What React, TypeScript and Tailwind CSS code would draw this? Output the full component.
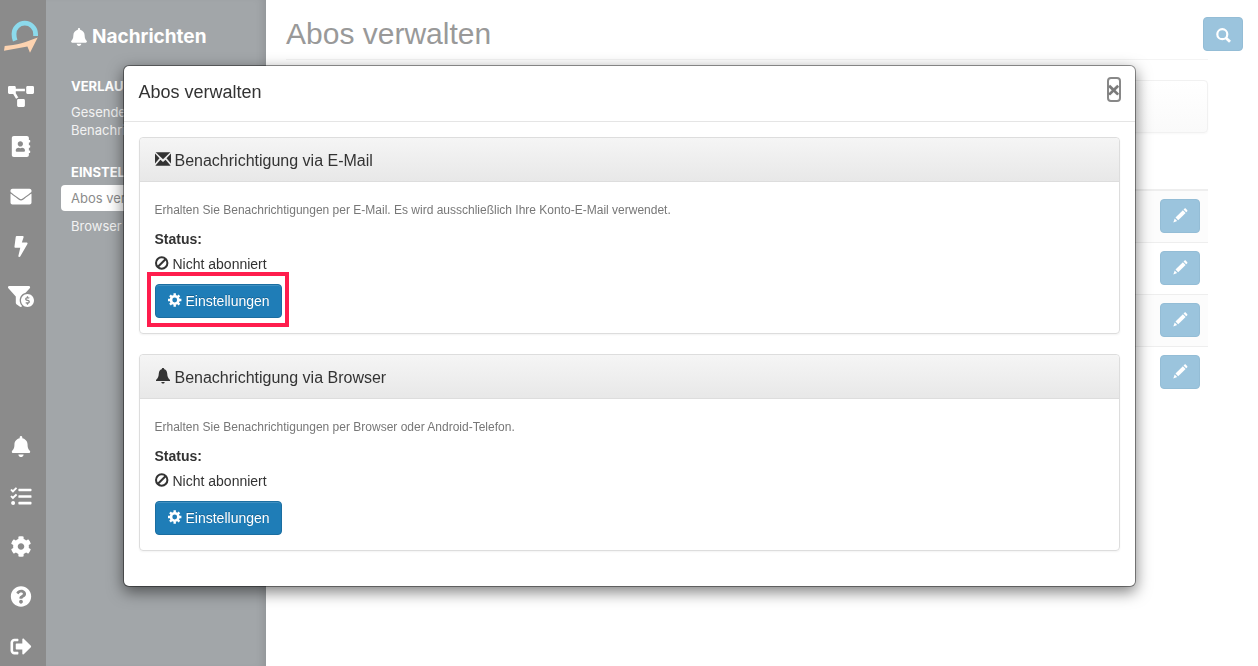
import React from "react";
import {
  FaAddressBook,
  FaBell,
  FaBolt,
  FaCog,
  FaEnvelope,
  FaFunnelDollar,
  FaProjectDiagram,
  FaQuestionCircle,
  FaSignOutAlt,
  FaTasks,
} from "react-icons/fa";

const topIcons = [
  { label: "Struktur", Icon: FaProjectDiagram },
  { label: "Kontakte", Icon: FaAddressBook },
  { label: "E-Mail", Icon: FaEnvelope },
  { label: "Aktionen", Icon: FaBolt },
  { label: "Filter", Icon: FaFunnelDollar },
];

const bottomIcons = [
  { label: "Nachrichten", Icon: FaBell },
  { label: "Aufgaben", Icon: FaTasks },
  { label: "Verwaltung", Icon: FaCog },
  { label: "Hilfe", Icon: FaQuestionCircle },
  { label: "Abmelden", Icon: FaSignOutAlt },
];

function Logo() {
  return (
    <svg viewBox="3 20 36 34" className="w-9 h-[34px]" aria-hidden="true">
      <path
        d="M15.2 40.6C14.200 38.200 14 36 14 34A10.800 10.800 0 0 1 35.600 34V36"
        fill="none"
        stroke="#8cdaec"
        strokeWidth="4.800"
      />
      <path d="M4.700 46C16 45.500 27 42 37.700 37.600L30 52.800L27.400 46.400L4 50.800Z" fill="#fdd3b0" />
    </svg>
  );
}

function EnvelopeIcon() {
  return (
    <svg viewBox="0 0 50 42" className="w-4 h-[14px] mb-1" fill="currentColor" aria-hidden="true">
      <path d="M2 0H48L25 22Z" />
      <path d="M0 4L14 19L0 35Z" />
      <path d="M50 4L36 19L50 35Z" />
      <path d="M1 42L17 23L25 30L33 23L49 42Z" />
    </svg>
  );
}

function BellIcon() {
  return (
    <svg viewBox="0 0 16 16" className="w-4 h-4 mb-1" fill="currentColor" aria-hidden="true">
      <path d="M8 0C8.800 0 9.200.5 9.300 1.200C11.200 1.700 12 3.400 12.200 5.400C12.400 8.200 12.800 9.800 15 12V13H1V12C3.200 9.800 3.600 8.200 3.800 5.400C4 3.400 4.800 1.700 6.700 1.200C6.800.5 7.200 0 8 0Z" />
      <path d="M6.300 14H9.700C9.500 15 8.900 15.600 8 15.600S6.500 15 6.300 14Z" />
    </svg>
  );
}

function BanIcon() {
  return (
    <svg viewBox="0 0 14 14" className="w-[14px] h-[14px] mb-[2px]" fill="none" stroke="currentColor" strokeWidth="2" aria-hidden="true">
      <circle cx="6.700" cy="7" r="5.700" />
      <path d="M2.700 11L10.700 3" />
    </svg>
  );
}

function GearIcon() {
  return (
    <svg viewBox="0 0 14 14" className="w-[14px] h-[14px] mb-[2px]" aria-hidden="true">
      <circle cx="6.700" cy="7" r="3.700" fill="none" stroke="currentColor" strokeWidth="2.600" />
      <g stroke="currentColor" strokeWidth="2.400">
        <path d="M6.700 .2V2.800M6.700 11.200V13.800M0 7H2.500M10.900 7H13.400" />
        <path d="M2 2.300L4 4.300M9.400 9.700L11.400 11.700M2 11.700L4 9.700M9.400 4.300L11.400 2.300" />
      </g>
    </svg>
  );
}

function PencilIcon() {
  return (
    <svg viewBox="0 0 15 15" className="w-[15px] h-[15px] mb-[2px]" fill="currentColor" aria-hidden="true">
      <path d="M11.400.7C11.900.2 12.400.2 12.900.7L14.100 1.900C14.600 2.400 14.600 2.900 14.100 3.400L13.200 4.300L10.500 1.600Z" />
      <path d="M9.900 2.200L12.600 4.900L5.200 12.300L2.500 9.600Z" />
      <path d="M1.700 10.600L4.200 13.100L.3 14.400Z" />
    </svg>
  );
}

function SearchIcon() {
  return (
    <svg viewBox="0 0 15 15" className="w-[15px] h-[15px] mt-[2px]" fill="none" stroke="currentColor" aria-hidden="true">
      <circle cx="6.300" cy="6.200" r="5" strokeWidth="2.200" />
      <path d="M10 9.900L14 13.700" strokeWidth="2.800" />
    </svg>
  );
}

function RailLink({ label, Icon }: { label: string; Icon: React.ComponentType<{ className?: string }> }) {
  return (
    <a href="#" aria-label={label} className="flex items-center justify-center h-[50px] pr-1">
      <Icon className="w-[26px] h-[21px]" />
    </a>
  );
}

function FadedButton({ label, children }: { label: string; children: React.ReactNode }) {
  return (
    <button
      type="button"
      aria-label={label}
      className="flex items-center justify-center w-10 h-[34px] rounded bg-[#9bc4dd] border border-[#94bdd6] text-white"
    >
      {children}
    </button>
  );
}

type PanelProps = {
  icon: React.ReactNode;
  title: string;
  text: string;
  highlight?: boolean;
};

function Panel({ icon, title, text, highlight }: PanelProps) {
  return (
    <section className="mb-5 border border-[#ddd] rounded shadow-[0_1px_2px_rgba(0,0,0,0.05)]">
      <h3 className="flex items-center gap-1 px-[15px] pt-[11px] pb-[9px] text-base leading-[23px] border-b border-[#ddd] rounded-t bg-linear-to-b from-[#f5f5f5] to-[#e8e8e8]">
        {icon}
        {title}
      </h3>
      <div className="p-[15px] text-sm">
        <p className="mb-[6px] text-xs leading-[26px] text-[#777]">{text}</p>
        <p className="mb-[5px] leading-5 font-bold">Status:</p>
        <p className="flex items-center gap-1 mb-[10px] leading-5">
          <BanIcon />
          Nicht abonniert
        </p>
        <div className="relative w-fit">
          <button
            type="button"
            className="flex items-center gap-1 h-[34px] pl-3 pr-[11px] rounded bg-[#1f7db7] border border-[#1b6ea1] text-white shadow-[inset_0_1px_0_rgba(255,255,255,0.15)] [text-shadow:0_-1px_0_rgba(0,0,0,0.2)]"
          >
            <GearIcon />
            Einstellungen
          </button>
          {highlight && (
            <div className="absolute -left-2 -right-[7px] -top-3 -bottom-[9px] border-4 border-[#ff1d4d] pointer-events-none" />
          )}
        </div>
      </div>
    </section>
  );
}

function SubscriptionDialog() {
  return (
    <div className="fixed inset-0 pt-[65px] px-4">
      <div
        role="dialog"
        aria-labelledby="dialog-title"
        className="max-w-[1013px] mx-auto bg-white bg-clip-padding border border-black/40 rounded-md shadow-[0_5px_15px_rgba(0,0,0,0.5)] text-[#333]"
      >
        <header className="flex items-start justify-between pl-[15px] pr-[14px] pt-[11px] pb-[15px] border-b border-[#e5e5e5]">
          <h2 id="dialog-title" className="pt-[2px] text-lg leading-[27px]">
            Abos verwalten
          </h2>
          <button
            type="button"
            aria-label="Schließen"
            className="flex items-center justify-center w-[14px] h-[25px] border-2 border-[#888] rounded text-[21px] leading-[21px] font-black text-[#7a7a7a] [text-shadow:0_0_1px_#7a7a7a]"
          >
            ×
          </button>
        </header>
        <div className="p-[15px]">
          <Panel
            icon={<EnvelopeIcon />}
            title="Benachrichtigung via E-Mail"
            text="Erhalten Sie Benachrichtigungen per E-Mail. Es wird ausschließlich Ihre Konto-E-Mail verwendet."
            highlight
          />
          <Panel
            icon={<BellIcon />}
            title="Benachrichtigung via Browser"
            text="Erhalten Sie Benachrichtigungen per Browser oder Android-Telefon."
          />
        </div>
      </div>
    </div>
  );
}

export default function App() {
  return (
    <div className="flex min-h-screen bg-white font-['Liberation_Sans',sans-serif]">
      <nav className="flex flex-col justify-between w-[46px] shrink-0 bg-[#8b8b8b] text-white">
        <div>
          <a href="#" aria-label="Startseite" className="flex items-center justify-center h-[71px] pr-1 pt-[3px]">
            <Logo />
          </a>
          {topIcons.map((item) => (
            <RailLink key={item.label} {...item} />
          ))}
        </div>
        <div className="-mb-[5px]">
          {bottomIcons.map((item) => (
            <RailLink key={item.label} {...item} />
          ))}
        </div>
      </nav>

      <aside className="w-[220px] shrink-0 pt-[25px] px-[15px] bg-[#a2a6a9] text-white text-[13px] font-['Inter',sans-serif] shadow-[inset_-8px_0_10px_-6px_rgba(0,0,0,0.12)]">
        <h2 className="flex items-center gap-[5px] px-[10px] mb-[29px] text-[19px] leading-6 font-bold">
          <FaBell className="w-4 h-[18px]" />
          Nachrichten
        </h2>
        <h3 className="px-[10px] leading-4 font-bold">VERLAUF</h3>
        <a href="#" className="block px-[10px] pt-[9px] mb-[25px] leading-[18px] text-[#f2f2f2]">
          Gesendete Benachrichtigungen
        </a>
        <h3 className="px-[10px] mb-[5px] leading-4 font-bold">EINSTELLUNGEN</h3>
        <a href="#" className="block px-[10px] mb-[2px] leading-[26px] rounded bg-white text-[#8b8b8b]">
          Abos verwalten
        </a>
        <a href="#" className="block px-[10px] leading-[26px] text-[#f2f2f2]">
          Browser
        </a>
      </aside>

      <main className="relative flex-1 min-w-0 pl-5 pr-[50px]">
        <h1 className="pt-[17px] pb-[9px] text-3xl leading-[33px] text-[#999] border-b border-[#f4f4f4]">
          Abos verwalten
        </h1>
        <div className="absolute top-[17px] right-[15px]">
          <FadedButton label="Suchen">
            <SearchIcon />
          </FadedButton>
        </div>
        <div className="h-[53px] mt-5 mb-14 border border-[#f1f1f1] rounded bg-linear-to-b from-white to-[#fafafa] shadow-[0_1px_2px_rgba(0,0,0,0.03)]" />
        <table className="w-full border-t-2 border-[#eee]">
          <tbody>
            {[1, 2, 3, 4].map((row) => (
              <tr key={row} className="h-[52px] odd:bg-[#fcfcfc] border-b border-[#eee] last:border-b-0 last:bg-white">
                <td className="px-2">
                  <div className="flex justify-end">
                    <FadedButton label="Bearbeiten">
                      <PencilIcon />
                    </FadedButton>
                  </div>
                </td>
              </tr>
            ))}
          </tbody>
        </table>
      </main>

      <SubscriptionDialog />
    </div>
  );
}
